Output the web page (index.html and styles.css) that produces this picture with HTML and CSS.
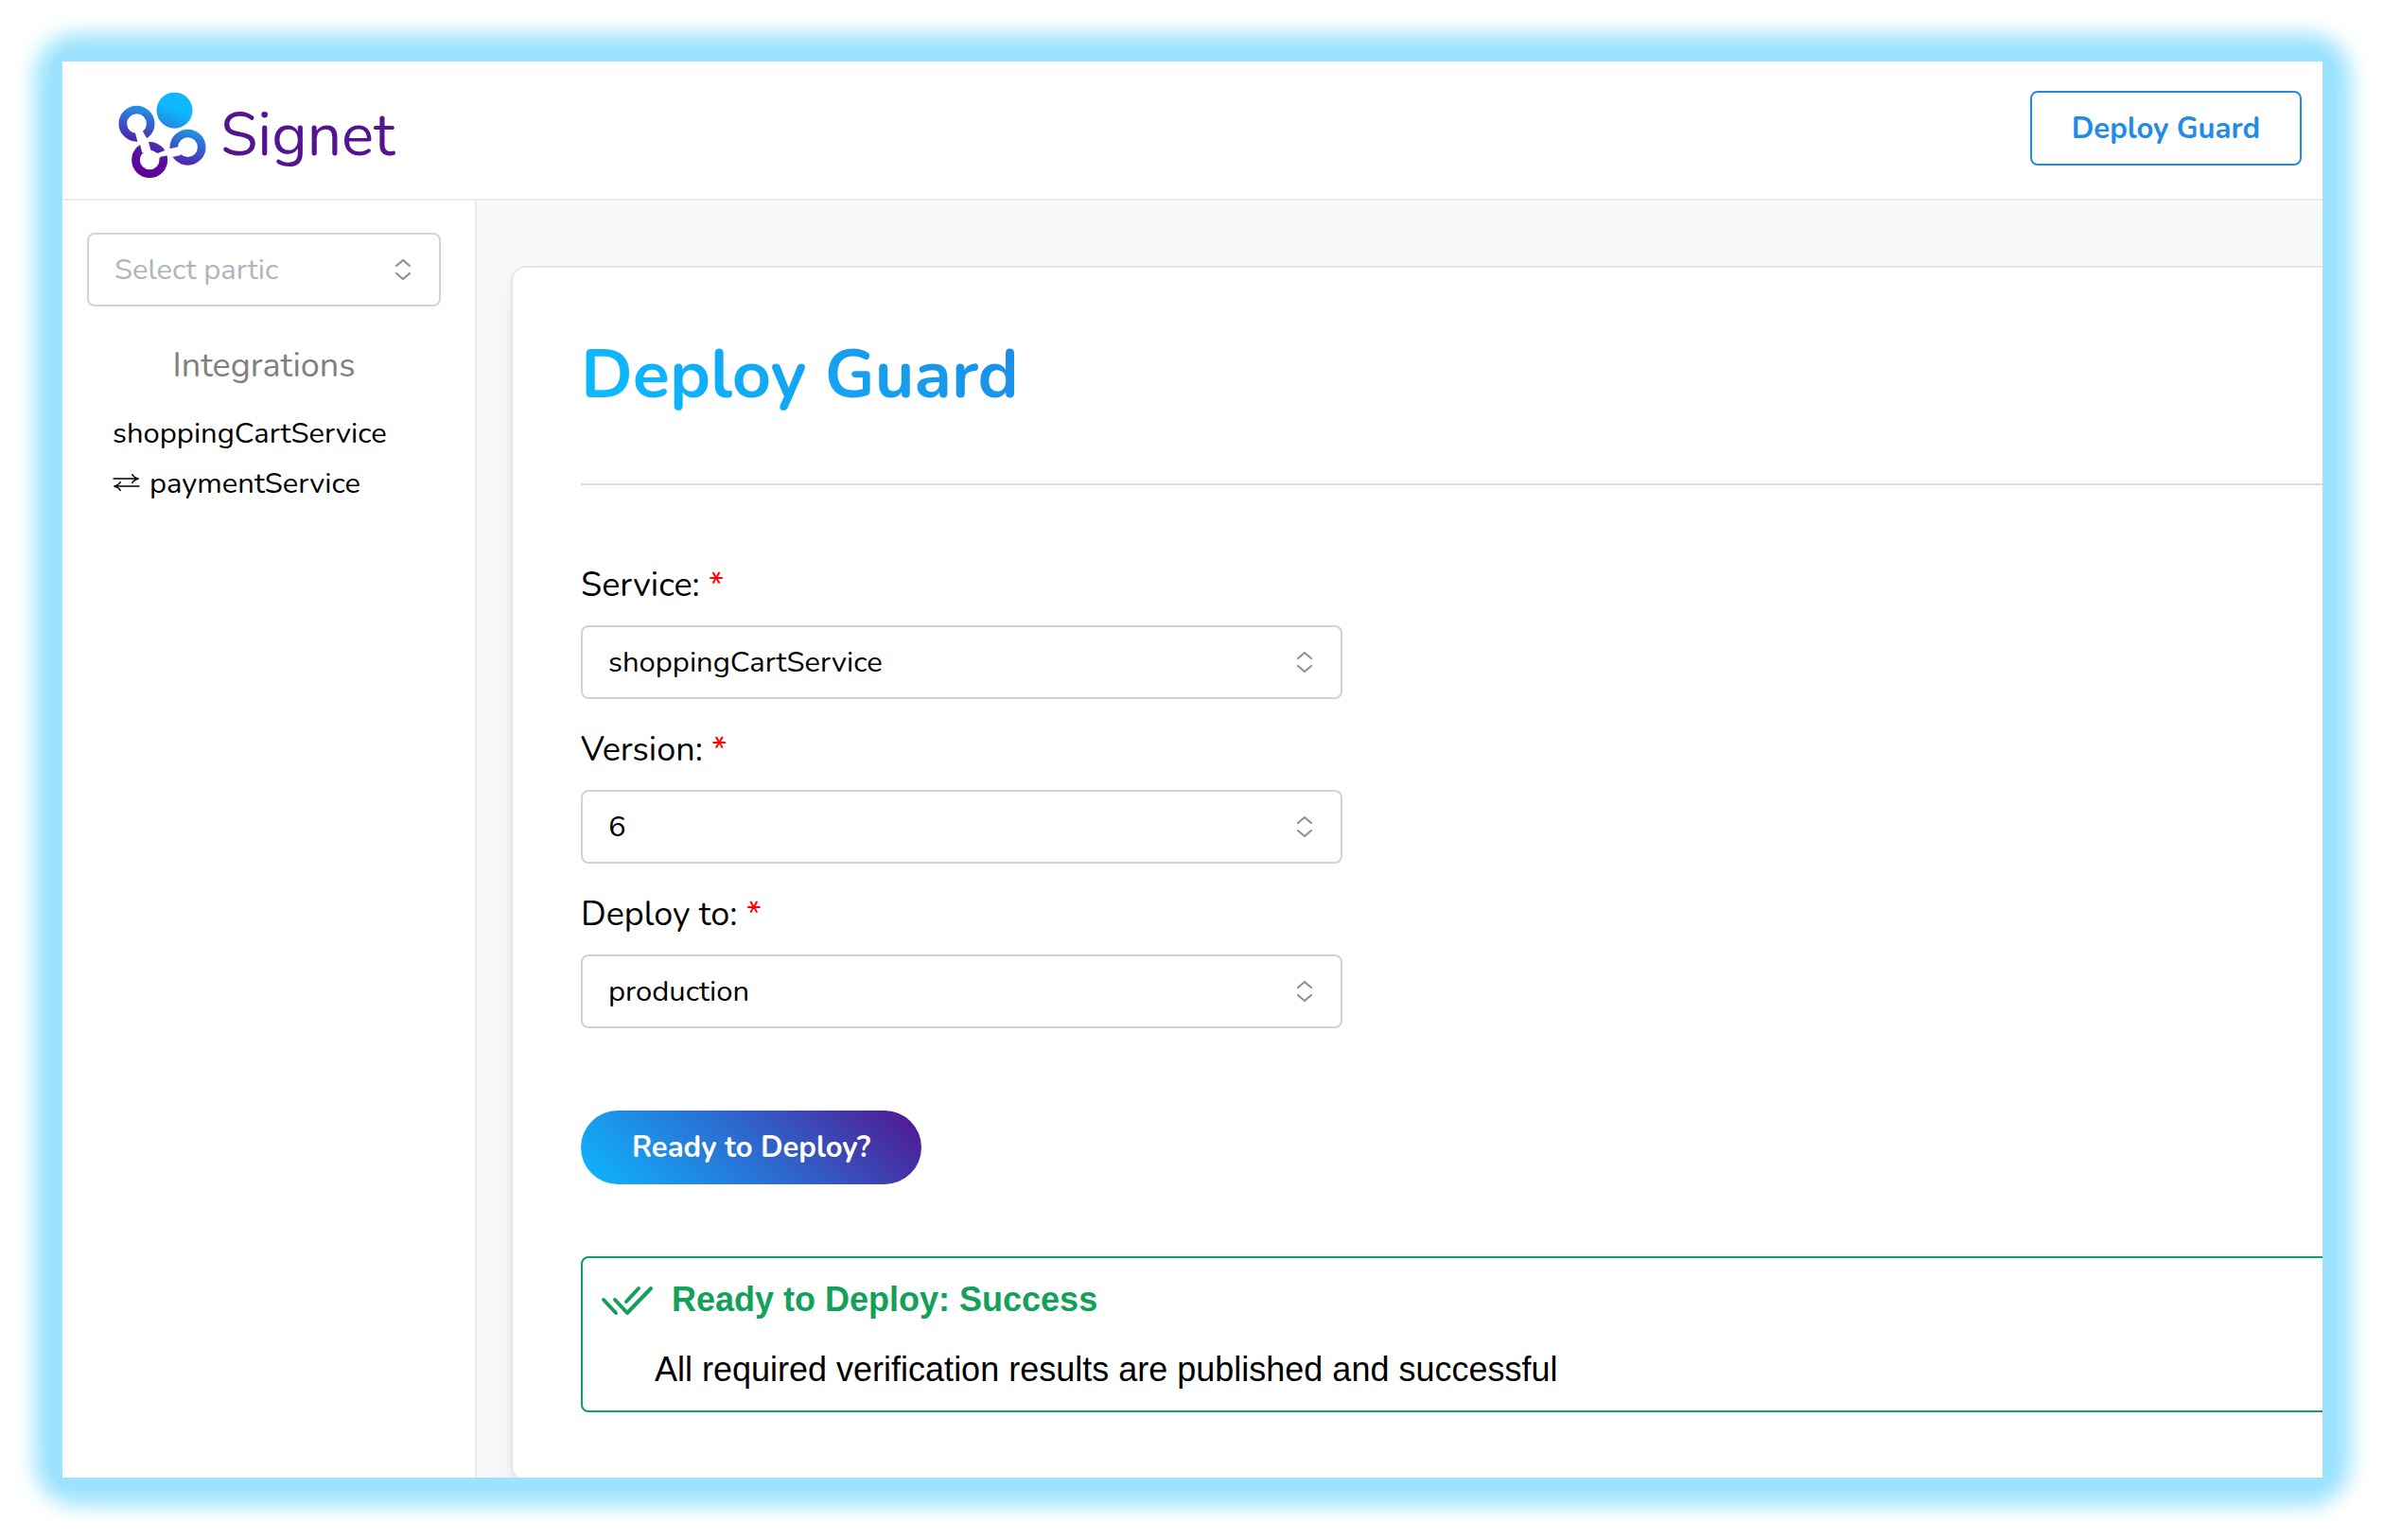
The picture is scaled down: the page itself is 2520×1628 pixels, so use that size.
FILE: index.html
```html
<!DOCTYPE html>
<html lang="en">
<head>
<meta charset="utf-8">
<title>Signet</title>
<link rel="stylesheet" href="styles.css">
</head>
<body>
<div class="glow">
<div class="window">
  <header class="topbar">
    <a class="brand" href="#">
      <svg class="brand-mark" viewBox="76 56 278 270" aria-hidden="true">
        <defs>
          <linearGradient id="dot" x1="0.6" y1="0.5" x2="0.4" y2="1"><stop offset="0" stop-color="#0db8ff"/><stop offset="1" stop-color="#2288e2"/></linearGradient>
          <linearGradient id="ring" gradientUnits="userSpaceOnUse" x1="150" y1="96" x2="128" y2="210"><stop offset="0" stop-color="#1f97ea"/><stop offset="1" stop-color="#5022ae"/></linearGradient>
          <linearGradient id="ring-right" gradientUnits="userSpaceOnUse" x1="310" y1="172" x2="280" y2="286"><stop offset="0" stop-color="#1f97ea"/><stop offset="1" stop-color="#5022ae"/></linearGradient>
          <linearGradient id="ring-low" gradientUnits="userSpaceOnUse" x1="195" y1="212" x2="170" y2="310"><stop offset="0" stop-color="#4a35b5"/><stop offset="0.6" stop-color="#5a0a9c"/><stop offset="1" stop-color="#5f009b"/></linearGradient>
        </defs>
        <circle cx="254" cy="112" r="57" fill="url(#dot)"/>
        <g fill="none" stroke-width="26">
          <circle cx="134" cy="154" r="44" stroke="url(#ring)"/>
          <circle cx="296" cy="229" r="44" stroke="url(#ring-right)"/>
          <circle cx="175" cy="269" r="44" stroke="url(#ring-low)"/>
        </g>
        <g fill="#fff">
          <path d="M128 178L137 212L145 222L151 246L180 242L171 211L164 197L153 178Z"/>
          <path d="M272 226L238 234L200 248L180 242L199 272L210 259L234 255L246 260L274 254Z"/>
        </g>
      </svg>
      <span class="brand-name">Signet</span>
    </a>
    <button class="outline-button" type="button">Deploy Guard</button>
  </header>
  <div class="body">
    <nav class="sidebar">
      <div class="select-box">
        <select class="select placeholder" aria-label="Select participant"><option>Select partic</option></select>
        <svg class="chevrons" viewBox="0 0 16 24" aria-hidden="true"><path d="M1 8L8 2L15 8M1 16L8 22L15 16"/></svg>
      </div>
      <h2 class="side-title">Integrations</h2>
      <ul class="side-list">
        <li><a href="#">shoppingCartService</a></li>
        <li><a href="#"><svg class="swap" viewBox="0 0 28 18" aria-hidden="true"><path d="M0 5H26M20 0Q22 4 27 5Q22 6 20 10M28 13H2M8 8Q6 12 1 13Q6 14 8 18"/></svg>paymentService</a></li>
      </ul>
    </nav>
    <main class="content">
      <section class="card">
        <h1 class="title">Deploy Guard</h1>
        <hr class="rule">
        <form class="form">
          <div class="field">
            <label class="label" for="service">Service: <span class="required">*</span></label>
            <div class="select-box">
              <select class="select" id="service"><option>shoppingCartService</option></select>
              <svg class="chevrons" viewBox="0 0 16 24" aria-hidden="true"><path d="M1 8L8 2L15 8M1 16L8 22L15 16"/></svg>
            </div>
          </div>
          <div class="field">
            <label class="label" for="version">Version: <span class="required">*</span></label>
            <div class="select-box">
              <select class="select" id="version"><option>6</option></select>
              <svg class="chevrons" viewBox="0 0 16 24" aria-hidden="true"><path d="M1 8L8 2L15 8M1 16L8 22L15 16"/></svg>
            </div>
          </div>
          <div class="field">
            <label class="label" for="target">Deploy to: <span class="required">*</span></label>
            <div class="select-box">
              <select class="select" id="target"><option>production</option></select>
              <svg class="chevrons" viewBox="0 0 16 24" aria-hidden="true"><path d="M1 8L8 2L15 8M1 16L8 22L15 16"/></svg>
            </div>
          </div>
          <button class="gradient-button" type="button">Ready to Deploy?</button>
        </form>
        <div class="result" role="status">
          <h3 class="result-title">
            <svg class="checks" viewBox="0 0 54 30" aria-hidden="true"><path d="M2 15L15 29M14 15L27 29L52 3M26 17L39 3"/></svg>
            Ready to Deploy: Success
          </h3>
          <p class="result-text">All required verification results are published and successful</p>
        </div>
      </section>
    </main>
  </div>
</div>
</div>
</body>
</html>
```
FILE: styles.css
```css
* {
  box-sizing: border-box;
}

body {
  margin: 0;
  padding: 51px 51px 52px 52px;
  background: #fff;
  color: #000;
  font-family: Nunito, Lato, sans-serif;
  font-size: 31px;
}

/* Soft blue halo around the app window */
.glow {
  padding: 14px;
  border-radius: 28px;
  background: #9de3ff;
  box-shadow: 0 0 26px 9px #9de3ff, 0 0 26px 9px #9de3ff;
}

.window {
  display: flex;
  flex-direction: column;
  height: calc(100vh - 131px);
  overflow: hidden;
  background: #fff;
}

.topbar {
  display: flex;
  justify-content: space-between;
  align-items: flex-start;
  padding: 31px 22px 35px 59px;
  border-bottom: 2px solid #e9ecef;
}

.brand {
  display: flex;
  align-items: center;
  gap: 15px;
  padding-top: 15px;
  height: 79px;
  color: #52148f;
  text-decoration: none;
}

.brand-mark {
  width: 93px;
  height: 90px;
}

.brand-name {
  font-size: 64px;
  line-height: 80px;
}

.outline-button {
  height: 79px;
  padding: 0 42px;
  border: 2px solid #228be6;
  border-radius: 8px;
  background: #fff;
  color: #228be6;
  font: bold 31px Nunito, Lato, sans-serif;
}

.body {
  display: flex;
  flex: 1;
  min-height: 0;
}

.sidebar {
  flex: none;
  width: 438px;
  padding: 34px 36px 0 26px;
  border-right: 2px solid #e9ecef;
}

.select-box {
  display: grid;
  align-items: center;
}

.select-box > * {
  grid-area: 1 / 1;
}

.select {
  width: 100%;
  height: 78px;
  padding: 0 80px 0 27px;
  appearance: none;
  border: 2px solid #ced4da;
  border-radius: 8px;
  background: #fff;
  color: #000;
  font: 31px Nunito, Lato, sans-serif;
}

.placeholder {
  color: #adb5bd;
}

.chevrons {
  justify-self: end;
  width: 16px;
  height: 24px;
  margin-right: 32px;
  fill: none;
  stroke: #868e96;
  stroke-width: 2;
  stroke-linecap: round;
  stroke-linejoin: round;
  pointer-events: none;
}

.side-title {
  margin: 41px 0 23px;
  color: #808080;
  font-size: 36px;
  font-weight: normal;
  line-height: 44px;
  text-align: center;
}

.side-list {
  margin: 0;
  padding: 0 0 0 27px;
  list-style: none;
  line-height: 53px;
}

.side-list a {
  display: flex;
  align-items: center;
  gap: 10px;
  color: #000;
  text-decoration: none;
}

.swap {
  width: 29px;
  height: 18px;
  margin-top: -4px;
  overflow: visible;
  fill: none;
  stroke: #000;
  stroke-width: 1.5;
}

.content {
  flex: 1;
  min-width: 0;
  padding: 69px 0 0 36px;
  background: #f8f9fb;
}

.card {
  margin-right: -36px;
  padding: 71px 72px;
  border: 2px solid #e6e6e6;
  border-radius: 16px;
  background: #fff;
  box-shadow: 0 2px 6px rgba(0, 0, 0, 0.05), 0 20px 30px rgba(0, 0, 0, 0.05);
}

.title {
  width: fit-content;
  margin: 0 0 73px;
  background: linear-gradient(45deg, #0cb8ff 10%, #1c8de6);
  background-clip: text;
  color: transparent;
  font-size: 72px;
  font-weight: bold;
  line-height: 84px;
}

.rule {
  height: 2px;
  margin: 0 -72px 83px 0;
  border: 0;
  background: #dcdcdc;
}

.form {
  display: flex;
  flex-direction: column;
  align-items: flex-start;
  gap: 31px;
}

.field {
  display: flex;
  flex-direction: column;
  gap: 19px;
  width: 100%;
  max-width: 805px;
}

.label {
  font-size: 36px;
  line-height: 46px;
}

.required {
  color: #f00;
}

.gradient-button {
  height: 78px;
  margin-top: 56px;
  padding: 0 54px;
  border: 0;
  border-radius: 39px;
  background: linear-gradient(45deg, #0cb8ff, #2c6bd0 50%, #52148f);
  color: #fff;
  font: bold 31px Nunito, Lato, sans-serif;
}

.result {
  margin: 76px -72px 0 0;
  padding: 22px 20px 21px;
  border: 2px solid #12a05a;
  border-radius: 8px;
  font-family: Helvetica, "Liberation Sans", Arial, sans-serif;
  font-size: 36px;
  line-height: 44px;
}

.result-title {
  display: flex;
  align-items: center;
  gap: 20px;
  margin: 0 0 30px;
  color: #12a05a;
  font-size: 36px;
}

.checks {
  width: 54px;
  height: 30px;
  overflow: visible;
  fill: none;
  stroke: #12a05a;
  stroke-width: 4;
  stroke-linecap: round;
  stroke-linejoin: round;
}

.result-text {
  margin: 0;
  padding-left: 56px;
}
```
